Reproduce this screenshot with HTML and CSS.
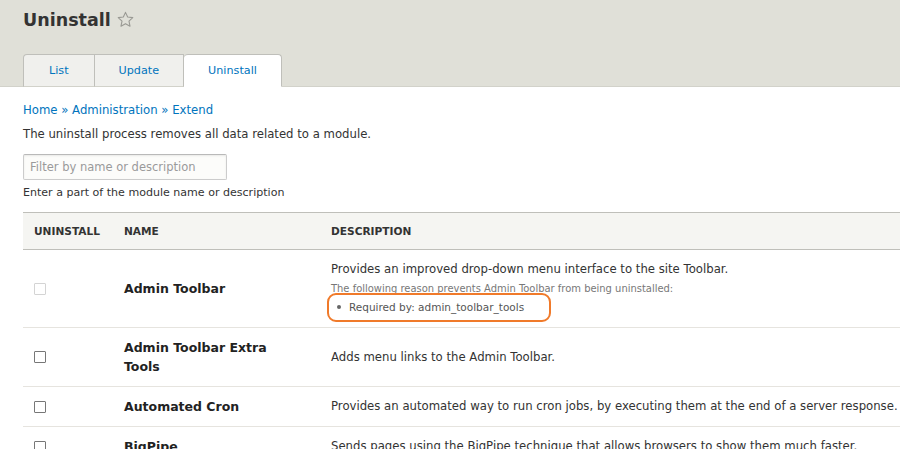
FILE: index.html
```html
<!DOCTYPE html>
<html lang="en">
<head>
<meta charset="utf-8">
<title>Uninstall</title>
<link rel="stylesheet" href="styles.css">
</head>
<body>
<header class="page-header">
  <h1 class="page-title">Uninstall
    <svg class="star" viewBox="0 0 20 20" width="17" height="17" aria-hidden="true"><path d="M10 1.6l2.55 5.5 6 .7-4.45 4.1 1.2 5.950L10 14.9l-5.3 2.95 1.2-5.95L1.45 7.8l6-.7z" fill="none" stroke="#9a9a94" stroke-width="1.3" stroke-linejoin="round"/></svg>
  </h1>
  <nav class="tabs">
    <a class="tab first" href="#">List</a>
    <a class="tab" href="#">Update</a>
    <a class="tab active" href="#">Uninstall</a>
  </nav>
</header>
<main class="content">
  <div class="breadcrumb"><a href="#">Home</a> » <a href="#">Administration</a> » <a href="#">Extend</a></div>
  <p class="intro">The uninstall process removes all data related to a module.</p>
  <div class="filter"><input type="text" placeholder="Filter by name or description"></div>
  <div class="help">Enter a part of the module name or description</div>
  <table class="modules">
    <thead>
      <tr><th class="c-check">Uninstall</th><th class="c-name">Name</th><th class="c-desc">Description</th></tr>
    </thead>
    <tbody>
      <tr>
        <td class="c-check"><span class="cb disabled"></span></td>
        <td class="c-name">Admin Toolbar</td>
        <td class="c-desc">
          <div>Provides an improved drop-down menu interface to the site Toolbar.</div>
          <div class="reason">The following reason prevents Admin Toolbar from being uninstalled:</div>
          <ul class="reasons"><li><span class="highlight">Required by: admin_toolbar_tools</span></li></ul>
        </td>
      </tr>
      <tr>
        <td class="c-check"><span class="cb"></span></td>
        <td class="c-name">Admin Toolbar Extra Tools</td>
        <td class="c-desc">Adds menu links to the Admin Toolbar.</td>
      </tr>
      <tr>
        <td class="c-check"><span class="cb"></span></td>
        <td class="c-name">Automated Cron</td>
        <td class="c-desc">Provides an automated way to run cron jobs, by executing them at the end of a server response.</td>
      </tr>
      <tr>
        <td class="c-check"><span class="cb"></span></td>
        <td class="c-name">BigPipe</td>
        <td class="c-desc">Sends pages using the BigPipe technique that allows browsers to show them much faster.</td>
      </tr>
    </tbody>
  </table>
</main>
</body>
</html>
```
FILE: styles.css
```css
html, body {
  margin: 0;
  padding: 0;
  overflow: hidden;
  background: #fff;
}
body {
  font-family: "DejaVu Sans", sans-serif;
  font-size: 11.7px;
  color: #333;
  width: 900px;
}
a {
  color: #0074bd;
  text-decoration: none;
}
.page-header {
  background: #e0e0d8;
  padding: 8px 23px 0;
  border-bottom: 1px solid #d2d2ca;
}
.page-title {
  margin: 0;
  font-size: 17.5px;
  line-height: 24px;
  font-weight: bold;
  color: #333;
  display: flex;
  align-items: center;
  gap: 6px;
}
.star {
  display: block;
  margin-top: -1px;
}
.tabs {
  display: flex;
  margin-top: 22px;
  margin-bottom: -1px;
}
.tab {
  display: block;
  height: 31px;
  line-height: 31px;
  padding: 0 24px;
  background: #f0f0ed;
  border: 1px solid #bfbfba;
  border-bottom: 1px solid #d2d2ca;
  border-left: none;
  color: #0074bd;
  font-size: 11.2px;
}
.tab.first {
  border-left: 1px solid #bfbfba;
  border-radius: 4px 0 0 0;
  padding: 0 25px;
}
.tab.active {
  background: #fff;
  border-bottom-color: #fff;
  border-radius: 4px 4px 0 0;
  padding: 0 24px;
}
.content {
  padding: 0 0 0 23px;
}
.breadcrumb {
  margin-top: 14px;
  line-height: 18px;
  color: #0074bd;
}
.intro {
  margin: 6px 0 0;
  line-height: 18px;
}
.filter {
  margin-top: 11px;
}
.filter input {
  box-sizing: border-box;
  width: 204px;
  height: 26px;
  padding: 0 6px;
  border: 1px solid #ccc;
  border-top-color: #b9b9b9;
  border-radius: 2px;
  background: #fcfcfa;
  font-family: "DejaVu Sans", sans-serif;
  font-size: 11.5px;
  color: #333;
  box-shadow: inset 0 1px 2px rgba(0,0,0,0.08);
  display: block;
}
.filter input::placeholder {
  color: #9a9a9a;
}
.help {
  margin-top: 5px;
  line-height: 16px;
  font-size: 11.05px;
  color: #333;
}
.modules {
  margin-top: 11px;
  width: 900px;
  border-collapse: collapse;
  table-layout: fixed;
}
.modules th {
  background: #f5f5f2;
  border-top: 1px solid #bfbfba;
  border-bottom: 1px solid #bfbfba;
  height: 36px;
  padding: 0 11px;
  text-align: left;
  text-transform: uppercase;
  font-size: 10.6px;
  font-weight: bold;
  color: #333;
}
.modules th.c-check, .modules td.c-check { width: 68px; }
.modules th.c-name, .modules td.c-name { width: 175px; padding-right: 21px; }
.modules td {
  padding: 10px 11px;
  border-bottom: 1px solid #e6e4df;
  vertical-align: middle;
  line-height: 19px;
}
.modules td.c-name {
  font-weight: bold;
  font-size: 12.5px;
  color: #222;
}
.modules td.c-desc {
  white-space: nowrap;
}
.cb {
  display: block;
  box-sizing: border-box;
  width: 12px;
  height: 12px;
  border: 1px solid #777;
  background: #fff;
  border-radius: 1px;
}
.cb.disabled {
  border-color: #d4d4d4;
}
.reason {
  font-size: 9.95px;
  color: #777;
}
.reasons {
  margin: 0;
  padding: 0 0 0 6px;
  list-style: none;
  font-size: 10.5px;
  color: #555;
}
.reasons li::before {
  content: "";
  display: inline-block;
  width: 4px;
  height: 4px;
  border-radius: 50%;
  background: #666;
  vertical-align: middle;
  margin: -2px 8px 0 0;
}
.highlight {
  position: relative;
}
.highlight::after {
  content: "";
  position: absolute;
  left: -22px;
  right: -27px;
  top: -8px;
  bottom: -9px;
  border: 2px solid #f07a2a;
  border-radius: 9px;
}
```
